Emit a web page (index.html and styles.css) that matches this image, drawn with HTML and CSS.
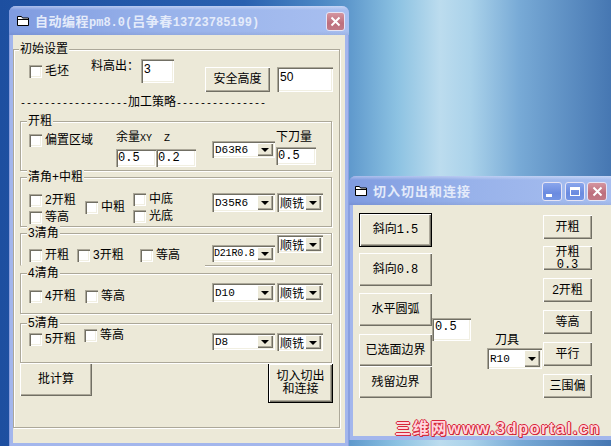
FILE: index.html
```
<!DOCTYPE html>
<html>
<head>
<meta charset="utf-8">
<link rel="stylesheet" href="styles.css">
</head>
<body>
<div class="desktop">
  <div class="win win-main">
    <div class="titlebar">
      <svg class="ficon" width="12" height="10" viewBox="0 0 12 10"><path d="M0.5 0.5h4l1 1.5h6v7.5h-11z" fill="#fff" stroke="#000"/><path d="M0.5 3.5h11" stroke="#000"/></svg>
      <span class="title">自动编程<span class="m">pm8.0(</span>吕争春<span class="m">13723785199)</span></span>
      <span class="cap-btn close main-close"><svg width="11" height="11" viewBox="0 0 11 11"><path d="M1.5 1.5l8 8M9.5 1.5l-8 8" stroke="#fff" stroke-width="2"/></svg></span>
    </div>
    <div class="client client-main">
      <div class="group outer">
        <span class="legend">初始设置</span>
        <div class="r1">
          <label class="chk c-maopi"><i class="box"></i>毛坯</label>
          <span class="lbl lbl-lgc">料高出：</span>
          <span class="tb tb-3">3</span>
          <span class="btn btn-aq"><span>安全高度</span></span>
          <span class="tb tb-50">50</span>
        </div>
        <div class="dash"><span class="d">------------------</span>加工策略<span class="d">---------------</span></div>

        <div class="group inner g-kc">
          <span class="legend">开粗</span>
          <label class="chk c-pz"><i class="box"></i>偏置区域</label>
          <div class="col col-yl">
            <span class="lbl">余量<span class="sm">XY&nbsp;&nbsp;Z</span></span>
            <div class="pair"><span class="tb tb-s m">0.5</span><span class="tb tb-s m">0.2</span></div>
          </div>
          <div class="combo cb-d63"><span class="val m">D63R6</span><span class="dd"></span></div>
          <div class="col col-xdl">
            <span class="lbl">下刀量</span>
            <span class="tb tb-s m">0.5</span>
          </div>
        </div>

        <div class="group inner g-qj">
          <span class="legend">清角+中粗</span>
          <div class="col col-qj1">
            <label class="chk w48"><i class="box"></i>2开粗</label>
            <label class="chk w48"><i class="box"></i>等高</label>
          </div>
          <label class="chk c-zc"><i class="box"></i>中粗</label>
          <div class="col col-qj3">
            <label class="chk w41"><i class="box"></i>中底</label>
            <label class="chk w41"><i class="box"></i>光底</label>
          </div>
          <div class="combo cb-d35"><span class="val m">D35R6</span><span class="dd"></span></div>
          <div class="combo cb-sx cb-sx2"><span class="val">顺铣</span><span class="dd"></span></div>
        </div>

        <div class="group inner g3">
          <span class="legend">3清角</span>
          <label class="chk c-kc3"><i class="box"></i>开粗</label>
          <label class="chk c-3kc"><i class="box"></i>3开粗</label>
          <label class="chk c-dg3"><i class="box"></i>等高</label>
          <div class="combo cb-d21"><span class="val m">D21R0.8</span><span class="dd"></span></div>
          <div class="combo cb-sx cb-sx3"><span class="val">顺铣</span><span class="dd"></span></div>
        </div>

        <div class="group inner g4">
          <span class="legend">4清角</span>
          <label class="chk c-4kc"><i class="box"></i>4开粗</label>
          <label class="chk c-dg4"><i class="box"></i>等高</label>
          <div class="combo cb-d10"><span class="val m">D10</span><span class="dd"></span></div>
          <div class="combo cb-sx cb-sx4"><span class="val">顺铣</span><span class="dd"></span></div>
        </div>

        <div class="group inner g5">
          <span class="legend">5清角</span>
          <label class="chk c-5kc"><i class="box"></i>5开粗</label>
          <label class="chk c-dg5"><i class="box"></i>等高</label>
          <div class="combo cb-d8"><span class="val m">D8</span><span class="dd"></span></div>
          <div class="combo cb-sx cb-sx5"><span class="val">顺铣</span><span class="dd"></span></div>
        </div>

        <div class="r-btns">
          <span class="btn btn-pjs"><span>批计算</span></span>
          <span class="btn default btn-qr"><span>切入切出<br>和连接</span></span>
        </div>
      </div>
    </div>
  </div>

  <div class="win win-2">
    <div class="titlebar tb2">
      <svg class="ficon" width="12" height="10" viewBox="0 0 12 10"><path d="M0.5 0.5h4l1 1.5h6v7.5h-11z" fill="#fff" stroke="#000"/><path d="M0.5 3.5h11" stroke="#000"/></svg>
      <span class="title title2">切入切出和连接</span>
      <span class="cap-btn blue min"><i class="min-g"></i></span>
      <span class="cap-btn blue max"><i class="max-g"></i></span>
      <span class="cap-btn close close2"><svg width="11" height="11" viewBox="0 0 11 11"><path d="M1.5 1.5l8 8M9.5 1.5l-8 8" stroke="#fff" stroke-width="2"/></svg></span>
    </div>
    <div class="client client-2">
      <div class="col col-l">
        <span class="btn default b-x15"><span>斜向<span class="m">1.5</span></span></span>
        <span class="btn b-x08"><span>斜向<span class="m">0.8</span></span></span>
        <span class="btn b-spyh"><span>水平圆弧</span></span>
        <span class="btn b-yxm"><span>已选面边界</span></span>
        <span class="btn b-clbj"><span>残留边界</span></span>
      </div>
      <div class="col col-m">
        <span class="tb tb-05 m">0.5</span>
      </div>
      <div class="col col-t">
        <span class="lbl lbl-dj">刀具</span>
        <div class="combo cb-r10"><span class="val m">R10</span><span class="dd"></span></div>
      </div>
      <div class="col col-r">
        <span class="btn rb"><span>开粗</span></span>
        <span class="btn rb rb-2 two"><span>开粗<br><span class="m">0.3</span></span></span>
        <span class="btn rb rb-n"><span>2开粗</span></span>
        <span class="btn rb rb-n"><span>等高</span></span>
        <span class="btn rb rb-n"><span>平行</span></span>
        <span class="btn rb rb-n"><span>三围偏</span></span>
      </div>
    </div>
  </div>

  <div class="watermark">三维网www.3dportal.cn</div>
</div>
</body>
</html>
```

FILE: styles.css
```
* { box-sizing: border-box; }
body {
  margin: 0;
  font-family: "Liberation Sans", "Noto Sans CJK SC", sans-serif;
  font-size: 12px;
  color: #000;
}
.desktop {
  width: 611px;
  height: 446px;
  position: relative;
  overflow: hidden;
  background: linear-gradient(90deg, #1d4fa0 0%, #2a61b0 40%, #4a86c4 52%, #5e98cc 57%, #8cc2e2 65%, #bcdcee 72%, #aad2ea 77%, #78aad6 85%, #4677b2 100%);
}
.m { font-family: "Liberation Mono", monospace; }
.sm { font-family: "Liberation Mono", monospace; font-size: 10px; }

/* windows */
.win {
  position: absolute;
  background: #a3b6ec;
  border-radius: 7px 7px 0 0;
  padding: 0 4px 4px;
  box-shadow: inset 1px 0 0 #8aa0e0, inset -1px 0 0 #8aa0e0;
}
.win-main { left: 9px; top: 6px; width: 340px; height: 441px; }
.win-2 { left: 349px; top: 176px; width: 270px; height: 264px; }
.titlebar {
  height: 29px;
  margin: 0 -4px;
  border-radius: 7px 7px 0 0;
  display: flex;
  align-items: center;
  padding-left: 8px;
  background:
    linear-gradient(180deg, rgba(255,255,255,0.35) 0, rgba(255,255,255,0) 4px, rgba(255,255,255,0) 25px, rgba(0,0,40,0.06) 29px),
    linear-gradient(90deg, #7f9be0 0%, #98b2ea 45%, #a8bff0 100%);
}
.tb2 { padding-left: 6px; }
.ficon { flex: none; margin-top: 1px; }
.title {
  color: #e4ebfa;
  font-family: "Noto Sans CJK SC", sans-serif;
  font-weight: bold;
  font-size: 13px;
  letter-spacing: 0.5px;
  margin-left: 6px;
  white-space: nowrap;
}
.title .m { font-size: 12px; font-weight: bold; letter-spacing: 0; }
.title2 { letter-spacing: 1px; margin-left: 6px; }
.cap-btn {
  flex: none;
  width: 20px;
  height: 19px;
  border-radius: 3px;
  border: 1px solid #e6e4f4;
  display: flex;
  align-items: center;
  justify-content: center;
}
.close { background: linear-gradient(180deg, #d595a0, #bd6f7d 60%, #c27a87); }
.main-close { margin-left: auto; margin-right: 4px; width: 19px; margin-top: 2px; }
.blue { background: linear-gradient(180deg, #8aa6ec, #6b8be0 60%, #7394e4); }
.min { margin-left: auto; margin-top: 2px; }
.max { margin-left: 3px; margin-top: 2px; }
.close2 { margin-left: 2px; margin-top: 2px; margin-right: 12px; }
.min-g { width: 6px; height: 3px; background: #fff; margin: 8px 6px 0 0; }
.max-g { width: 10px; height: 9px; border: 1px solid #fff; border-top-width: 3px; }

.client { background: #ECE9D8; }
.client-main { height: 408px; padding-top: 14px; }
.client-2 { height: 231px; display: flex; align-items: flex-start; }

/* group boxes */
.group {
  position: relative;
  border: 1px solid #aca899;
  box-shadow: inset 1px 1px 0 #fff, 1px 1px 0 #fff;
  display: flex;
  align-items: flex-start;
  flex: none;
}
.legend {
  position: absolute;
  top: -9px;
  left: 6px;
  padding: 0 1px;
  background: #ECE9D8;
  line-height: 16px;
  white-space: nowrap;
}
.outer {
  width: 327px;
  height: 379px;
  flex-direction: column;
}
.outer > .legend { left: 5px; }
.inner { width: 312px; margin-left: 6px; }
.g-kc { margin-top: 12px; height: 50px; }
.g-qj { margin-top: 6px; height: 50px; }
.g3 { margin-top: 6px; height: 33px; }
.g4 { margin-top: 7px; height: 41px; }
.g5 { margin-top: 9px; height: 40px; }

/* controls */
.lbl { line-height: 16px; white-space: nowrap; flex: none; }
.chk {
  display: flex;
  align-items: center;
  gap: 3px;
  height: 13px;
  line-height: 13px;
  white-space: nowrap;
  flex: none;
}
.box {
  width: 13px;
  height: 13px;
  flex: none;
  background: #fff;
  box-shadow: inset 1px 1px 0 #aca899, inset 2px 2px 0 #716f64, inset -1px -1px 0 #fff, inset -2px -2px 0 #f1efe2;
}
.tb {
  display: block;
  flex: none;
  background: #fff;
  box-shadow: inset 1px 1px 0 #aca899, inset 2px 2px 0 #716f64, inset -1px -1px 0 #fff, inset -2px -2px 0 #f1efe2;
  padding: 2px 3px;
  line-height: 14px;
  white-space: nowrap;
}
.tb-s { width: 40px; height: 18px; padding: 2px 2px; font-size: 12px; }
.btn {
  display: flex;
  flex: none;
  align-items: center;
  justify-content: center;
  text-align: center;
  background: #ECE9D8;
  box-shadow: inset 1px 1px 0 #fff, inset -1px -1px 0 #716f64, inset -2px -2px 0 #aca899;
  white-space: nowrap;
  line-height: 13px;
}
.btn.default {
  border: 1px solid #000;
  box-shadow: inset 1px 1px 0 #fff, inset -1px -1px 0 #716f64, inset -2px -2px 0 #aca899;
}
.combo {
  display: flex;
  flex: none;
  background: #fff;
  box-shadow: inset 1px 1px 0 #aca899, inset 2px 2px 0 #716f64, inset -1px -1px 0 #fff, inset -2px -2px 0 #f1efe2;
  padding: 2px;
}
.combo .val {
  flex: 1;
  min-width: 0;
  padding-left: 1px;
  font-size: 11px;
  display: flex;
  align-items: center;
  white-space: nowrap;
  overflow: hidden;
}
.combo .val:not(.m) { font-size: 12px; }
.combo .dd {
  width: 16px;
  flex: none;
  background: #ECE9D8;
  box-shadow: inset 1px 1px 0 #fff, inset -1px -1px 0 #716f64, inset -2px -2px 0 #aca899;
  display: flex;
  align-items: center;
  justify-content: center;
}
.combo .dd::after {
  content: "";
  border-left: 4px solid transparent;
  border-right: 4px solid transparent;
  border-top: 4px solid #000;
  margin-top: 1px;
}
.col { display: flex; flex-direction: column; flex: none; align-items: flex-start; }
.pair { display: flex; margin-top: 2px; }

/* row 1 */
.r1 { display: flex; align-items: flex-start; }
.c-maopi { margin: 15px 0 0 15px; width: 44px; }
.lbl-lgc { margin: 8px 0 0 18px; width: 49px; }
.tb-3 { margin: 9px 0 0 1px; width: 33px; height: 24px; padding-top: 3px; }
.btn-aq { margin: 17px 0 0 31px; width: 65px; height: 25px; }
.tb-50 { margin: 17px 0 0 7px; width: 56px; height: 25px; padding-top: 3px; }

.dash {
  margin: 3px 0 0 6px;
  height: 14px;
  line-height: 14px;
  white-space: nowrap;
}
.dash .d { font-family: "Liberation Mono", monospace; font-size: 10px; }

/* 开粗 */
.c-pz { margin: 12px 0 0 8px; width: 66px; }
.col-yl { margin: 7px 0 0 21px; width: 80px; }
.cb-d63 { margin: 19px 0 0 16px; width: 63px; height: 17px; }
.col-xdl { margin: 7px 0 0 1px; width: 40px; }
.col-xdl .tb-s { margin-top: 2px; }

/* 清角+中粗 */
.col-qj1 { margin: 16px 0 0 8px; width: 48px; gap: 4px; }
.w48 { width: 48px; }
.w41 { width: 41px; }
.c-zc { margin: 23px 0 0 8px; width: 41px; }
.col-qj3 { margin: 15px 0 0 7px; width: 41px; gap: 4px; }
.cb-d35 { margin: 15px 0 0 38px; width: 63px; height: 19px; }
.cb-sx { width: 46px; margin-left: 2px; }
.cb-sx2 { margin-top: 15px; height: 19px; }

/* 3清角 */
.g3 { border-bottom-color: transparent; box-shadow: inset 1px 1px 0 #fff, 1px 0 0 #fff; }
.g3::after {
  content: "";
  position: absolute;
  left: 184px;
  right: -1px;
  bottom: -1px;
  height: 1px;
  background: #aca899;
  box-shadow: 0 1px 0 #fff;
}
.c-kc3 { margin: 15px 0 0 8px; width: 41px; }
.c-3kc { margin: 15px 0 0 7px; width: 48px; }
.c-dg3 { margin: 15px 0 0 15px; width: 41px; }
.cb-d21 { margin: 11px 0 0 31px; width: 63px; height: 17px; }
.cb-d21 .val { font-size: 10px; letter-spacing: -0.2px; padding-left: 0; }
.cb-sx3 { margin-top: 1px; height: 18px; }

/* 4清角 */
.c-4kc { margin: 16px 0 0 8px; width: 48px; }
.c-dg4 { margin: 16px 0 0 8px; width: 41px; }
.cb-d10 { margin: 9px 0 0 86px; width: 63px; height: 19px; }
.cb-sx4 { margin-top: 9px; height: 19px; }

/* 5清角 */
.c-5kc { margin: 9px 0 0 8px; width: 48px; }
.c-dg5 { margin: 5px 0 0 7px; width: 41px; }
.cb-d8 { margin: 9px 0 0 87px; width: 63px; height: 17px; }
.cb-sx5 { margin-top: 9px; height: 18px; }

/* bottom buttons */
.r-btns { display: flex; align-items: flex-start; }
.btn-pjs { margin-left: 6px; width: 72px; height: 33px; }
.btn-qr { margin-left: 176px; width: 65px; height: 40px; line-height: 13px; }

/* window 2 */
.col-l { margin: 8px 0 0 6px; width: 73px; }
.col-l .btn { width: 73px; }
.b-x15 { height: 34px; }
.b-x08 { height: 33px; margin-top: 6px; }
.b-spyh { height: 33px; margin-top: 7px; }
.b-yxm { height: 32px; margin-top: 8px; }
.b-clbj { height: 32px; }
.col-m { margin-top: 113px; }
.tb-05 { width: 39px; height: 23px; font-size: 12px; }
.col-t { margin: 127px 0 0 16px; }
.lbl-dj { margin-left: 8px; }
.cb-r10 { width: 55px; height: 21px; }
.col-r { margin: 10px 0 0 1px; }
.rb { width: 49px; height: 24px; }
.rb-2 { margin-top: 7px; }
.rb-n { margin-top: 8px; }
.two { line-height: 12px; align-items: center; }
.two > span { display: block; }

.watermark {
  position: absolute;
  left: 395px;
  top: 420px;
  font-family: "Liberation Sans", "Noto Sans CJK SC", sans-serif;
  font-weight: bold;
  font-size: 16px;
  line-height: 18px;
  letter-spacing: 1.7px;
  color: #ffd6de;
  white-space: nowrap;
  text-shadow: 1px 0 0 #d8283c, -1px 0 0 #d8283c, 0 1px 0 #d8283c, 0 -1px 0 #d8283c, 1px 1px 0 #b01828;
}
```
